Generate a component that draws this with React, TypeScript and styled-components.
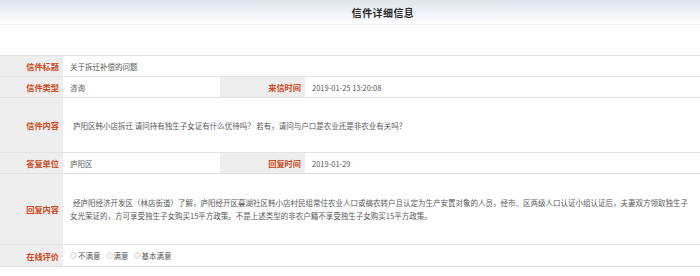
import styled, { createGlobalStyle } from "styled-components";

const GlobalStyle = createGlobalStyle`
  html, body {
    margin: 0;
    padding: 0;
    background: #ffffff;
    font-family: "Noto Sans CJK SC", "Liberation Sans", sans-serif;
  }
`;

const Page = styled.div`
  width: 700px;
  height: 276px;
  overflow: hidden;
  background: #ffffff;
`;

const Header = styled.div`
  height: 24px;
  background: linear-gradient(to bottom, #dde5ef 0%, #eef2f8 50%, #ffffff 100%);
  border-bottom: 1px solid #f1f1f1;
  display: flex;
  align-items: center;
  justify-content: center;
  padding-left: 66px;
`;

const Title = styled.h1`
  margin: 0;
  font-size: 10px;
  font-weight: bold;
  color: #2b2b2b;
  letter-spacing: 0.4px;
`;

const Spacer = styled.div`
  height: 30px;
`;

const Table = styled.table`
  width: 700px;
  border-collapse: collapse;
  table-layout: fixed;
  border-top: 1px solid #e2e2e2;
`;

const Row = styled.tr<{ h: number }>`
  height: ${(p) => p.h}px;
  border-bottom: 1px solid #e2e2e2;
`;

const Label = styled.th`
  background: #eeeeee;
  color: #cc4a1c;
  font-size: 8.2px;
  font-weight: bold;
  text-align: right;
  padding: 0 4px 0 0;
  vertical-align: middle;
  white-space: nowrap;
`;

const Value = styled.td<{ indent?: boolean }>`
  background: #ffffff;
  color: #5a5a5a;
  font-size: 7.5px;
  text-align: left;
  padding: 0 6px 0 7px;
  vertical-align: middle;
  line-height: 13px;
  text-indent: ${(p) => (p.indent ? "3px" : "0")};
`;

const Rating = styled.div`
  display: flex;
  align-items: center;
`;

const Choice = styled.label`
  display: flex;
  align-items: center;
  margin-right: 5px;
  color: #5a5a5a;
  font-size: 7.5px;
`;

const Dot = styled.span`
  width: 5px;
  height: 5px;
  border-radius: 50%;
  border: 1px solid #dcdcdc;
  background: #f4f4f4;
  margin-right: 1px;
`;

export default function App() {
  return (
    <Page>
      <GlobalStyle />
      <Header>
        <Title>信件详细信息</Title>
      </Header>
      <Spacer />
      <Table>
        <colgroup>
          <col style={{ width: 63 }} />
          <col style={{ width: 157 }} />
          <col style={{ width: 85 }} />
          <col style={{ width: 395 }} />
        </colgroup>
        <tbody>
          <Row h={21}>
            <Label>信件标题</Label>
            <Value colSpan={3}>关于拆迁补偿的问题</Value>
          </Row>
          <Row h={21}>
            <Label>信件类型</Label>
            <Value>咨询</Value>
            <Label>来信时间</Label>
            <Value>2019-01-25 13:20:08</Value>
          </Row>
          <Row h={55}>
            <Label>信件内容</Label>
            <Value colSpan={3} indent>
              庐阳区韩小店拆迁 请问持有独生子女证有什么优待吗？ 若有，请问与户口是农业还是非农业有关吗？
            </Value>
          </Row>
          <Row h={21}>
            <Label>答复单位</Label>
            <Value>庐阳区</Value>
            <Label>回复时间</Label>
            <Value>2019-01-29</Value>
          </Row>
          <Row h={71}>
            <Label>回复内容</Label>
            <Value colSpan={3} indent>
              经庐阳经济开发区（林店街道）了解，庐阳经开区蔓湖社区韩小店村民组常住农业人口或搞农转户且认定为生产安置对象的人员，经市、区两级人口认证小组认证后，夫妻双方领取独生子女光荣证的，方可享受独生子女购买15平方政策。不是上述类型的非农户籍不享受独生子女购买15平方政策。
            </Value>
          </Row>
          <Row h={22}>
            <Label>在线评价</Label>
            <Value colSpan={3}>
              <Rating>
                <Choice>
                  <Dot />
                  不满意
                </Choice>
                <Choice>
                  <Dot />
                  满意
                </Choice>
                <Choice>
                  <Dot />
                  基本满意
                </Choice>
              </Rating>
            </Value>
          </Row>
        </tbody>
      </Table>
    </Page>
  );
}
